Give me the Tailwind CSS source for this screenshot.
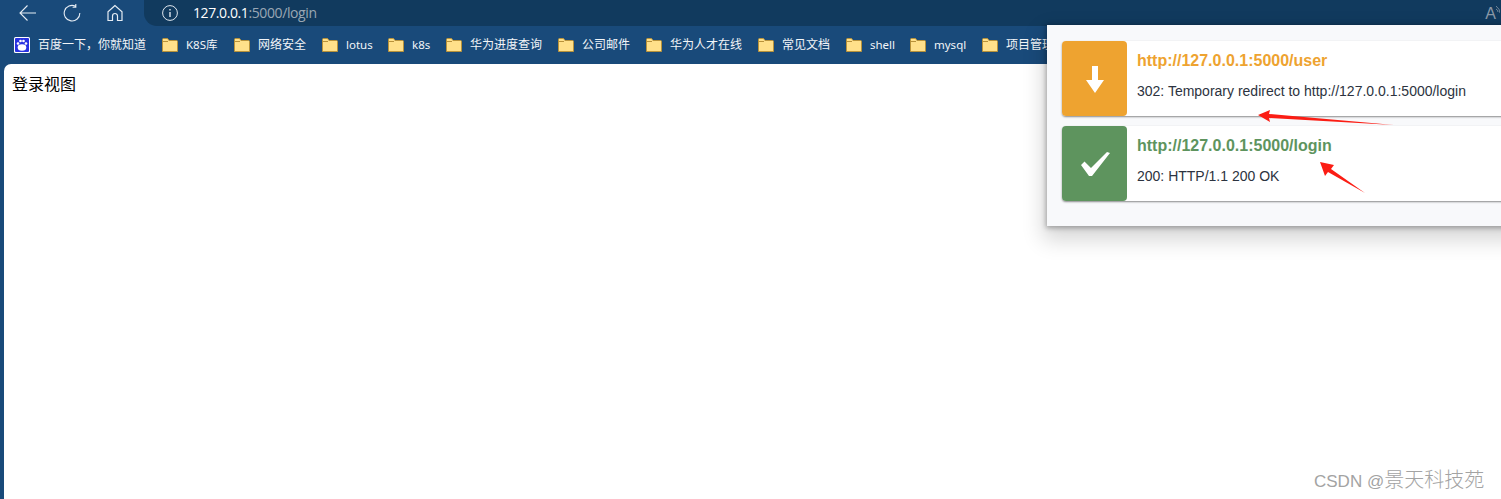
<!DOCTYPE html>
<html lang="zh">
<head>
<meta charset="utf-8">
<script src="https://cdn.jsdelivr.net/npm/@tailwindcss/browser@4"></script>
<title>登录视图</title>
</head>
<body class="relative w-[1501px] h-[499px] overflow-hidden bg-[#194a7a] font-['Liberation_Sans','Noto_Sans_CJK_SC',sans-serif]">
<!-- toolbar -->
<div class="flex h-[26px] items-center">
  <div class="flex w-[144px] shrink-0 items-center pl-[19px] gap-[26px] text-[#e6edf4]">
    <svg class="w-[18px] h-[18px]" viewBox="0 0 18 18" fill="none" stroke="currentColor" stroke-width="1.1"><path d="M1 9H17M8.5 1.5 1 9l7.5 7.500"/></svg>
    <svg class="w-[18px] h-[18px]" viewBox="0 0 18 18" fill="none" stroke="currentColor" stroke-width="1.1"><path d="M12.5 2.2A7.8 7.8 0 1 0 16.8 9M12.8 0v3.2H9.6" /></svg>
    <svg class="w-[16px] h-[18px]" viewBox="0 0 16 18" fill="none" stroke="currentColor" stroke-width="1.2"><path d="M8 1.5 1 7.8V16.5H5.500V12a2.500 2.500 0 0 1 5 0V16.500H15V7.800Z"/></svg>
  </div>
  <div class="flex flex-1 h-[26px] items-center rounded-bl-[13px] bg-[#113a5e] pl-[18px]">
    <svg class="w-[16px] h-[16px] text-[#dfe6ee]" viewBox="0 0 16 16" fill="none" stroke="currentColor" stroke-width="1"><circle cx="8" cy="8" r="7.4"/><path d="M8 7v5M8 4v1.4" stroke-width="1.4"/></svg>
    <div class="ml-[15px] text-[14px] font-['Open_Sans','Noto_Sans',sans-serif] leading-none tracking-[-0.4px]"><span class="text-white">127.0.0.1</span><span class="text-[#9aa7b4]">:5000/login</span></div>
    <div class="ml-auto mr-0 flex items-start pr-[1px] text-[#8b99a8]"><span class="text-[16px] leading-none mt-[2px]">A</span><svg class="w-[4px] h-[8px] mt-[1px]" viewBox="0 0 4 8" fill="none" stroke="currentColor" stroke-width="0.8"><path d="M0 1q4 3 4 7M0 4q2 1 2 3"/></svg></div>
  </div>
</div>
<!-- bookmarks -->
<div class="flex h-[38px] items-center pl-[14px] gap-[16px] overflow-hidden whitespace-nowrap text-[12px] text-[#f2f5f8] font-['Noto_Sans','Noto_Sans_CJK_SC',sans-serif]">
  <div class="flex items-center gap-[8px] shrink-0">
    <svg class="w-[16px] h-[16px]" viewBox="0 0 16 16"><rect width="16" height="16" rx="1.5" fill="#fff"/><rect x="1" y="1" width="14" height="14" rx="1" fill="#2932e1"/><circle cx="4" cy="6.5" r="1.3" fill="#fff"/><circle cx="6.5" cy="4" r="1.3" fill="#fff"/><circle cx="9.5" cy="4" r="1.3" fill="#fff"/><circle cx="12" cy="6.5" r="1.3" fill="#fff"/><ellipse cx="8" cy="10.5" rx="4.3" ry="3.3" fill="#fff"/></svg>
    <span class="w-[108px]">百度一下，你就知道</span>
  </div>
  <div class="flex items-center gap-[8px] shrink-0"><svg class="w-[16px] h-[14px]" viewBox="0 0 16 14"><path d="M.5 13.5V1.5q0-1 1-1h4l1.5 2h7.500q1 0 1 1v10Z" fill="#ffe08a" stroke="#b8923a"/><path d="M.5 3.500H6" stroke="#b8923a" fill="none"/></svg><span class="w-[32px] text-[11.5px]">K8S库</span></div>
  <div class="flex items-center gap-[8px] shrink-0"><svg class="w-[16px] h-[14px]" viewBox="0 0 16 14"><path d="M.5 13.5V1.5q0-1 1-1h4l1.5 2h7.500q1 0 1 1v10Z" fill="#ffe08a" stroke="#b8923a"/><path d="M.5 3.500H6" stroke="#b8923a" fill="none"/></svg><span class="w-[48px]">网络安全</span></div>
  <div class="flex items-center gap-[8px] shrink-0"><svg class="w-[16px] h-[14px]" viewBox="0 0 16 14"><path d="M.5 13.5V1.5q0-1 1-1h4l1.5 2h7.500q1 0 1 1v10Z" fill="#ffe08a" stroke="#b8923a"/><path d="M.5 3.500H6" stroke="#b8923a" fill="none"/></svg><span class="w-[26px] text-[11.5px]">lotus</span></div>
  <div class="flex items-center gap-[8px] shrink-0"><svg class="w-[16px] h-[14px]" viewBox="0 0 16 14"><path d="M.5 13.5V1.5q0-1 1-1h4l1.5 2h7.500q1 0 1 1v10Z" fill="#ffe08a" stroke="#b8923a"/><path d="M.5 3.500H6" stroke="#b8923a" fill="none"/></svg><span class="w-[18px] text-[11.5px]">k8s</span></div>
  <div class="flex items-center gap-[8px] shrink-0"><svg class="w-[16px] h-[14px]" viewBox="0 0 16 14"><path d="M.5 13.5V1.5q0-1 1-1h4l1.5 2h7.500q1 0 1 1v10Z" fill="#ffe08a" stroke="#b8923a"/><path d="M.5 3.500H6" stroke="#b8923a" fill="none"/></svg><span class="w-[72px]">华为进度查询</span></div>
  <div class="flex items-center gap-[8px] shrink-0"><svg class="w-[16px] h-[14px]" viewBox="0 0 16 14"><path d="M.5 13.5V1.5q0-1 1-1h4l1.5 2h7.500q1 0 1 1v10Z" fill="#ffe08a" stroke="#b8923a"/><path d="M.5 3.500H6" stroke="#b8923a" fill="none"/></svg><span class="w-[48px]">公司邮件</span></div>
  <div class="flex items-center gap-[8px] shrink-0"><svg class="w-[16px] h-[14px]" viewBox="0 0 16 14"><path d="M.5 13.5V1.5q0-1 1-1h4l1.5 2h7.500q1 0 1 1v10Z" fill="#ffe08a" stroke="#b8923a"/><path d="M.5 3.500H6" stroke="#b8923a" fill="none"/></svg><span class="w-[72px]">华为人才在线</span></div>
  <div class="flex items-center gap-[8px] shrink-0"><svg class="w-[16px] h-[14px]" viewBox="0 0 16 14"><path d="M.5 13.5V1.5q0-1 1-1h4l1.5 2h7.500q1 0 1 1v10Z" fill="#ffe08a" stroke="#b8923a"/><path d="M.5 3.500H6" stroke="#b8923a" fill="none"/></svg><span class="w-[48px]">常见文档</span></div>
  <div class="flex items-center gap-[8px] shrink-0"><svg class="w-[16px] h-[14px]" viewBox="0 0 16 14"><path d="M.5 13.5V1.5q0-1 1-1h4l1.5 2h7.500q1 0 1 1v10Z" fill="#ffe08a" stroke="#b8923a"/><path d="M.5 3.500H6" stroke="#b8923a" fill="none"/></svg><span class="w-[24px] text-[11.5px]">shell</span></div>
  <div class="flex items-center gap-[8px] shrink-0"><svg class="w-[16px] h-[14px]" viewBox="0 0 16 14"><path d="M.5 13.5V1.5q0-1 1-1h4l1.5 2h7.500q1 0 1 1v10Z" fill="#ffe08a" stroke="#b8923a"/><path d="M.5 3.500H6" stroke="#b8923a" fill="none"/></svg><span class="w-[32px] text-[11.5px]">mysql</span></div>
  <div class="flex items-center gap-[8px] shrink-0"><svg class="w-[16px] h-[14px]" viewBox="0 0 16 14"><path d="M.5 13.5V1.5q0-1 1-1h4l1.5 2h7.500q1 0 1 1v10Z" fill="#ffe08a" stroke="#b8923a"/><path d="M.5 3.500H6" stroke="#b8923a" fill="none"/></svg><span>项目管理</span></div>
</div>
<!-- page -->
<div class="ml-[4px] h-[435px] rounded-tl-[7px] bg-white pl-[8px] pt-[11px] text-[16px] leading-[17px] text-black font-['Noto_Sans_CJK_SC',sans-serif]">登录视图</div>
<!-- popup -->
<div class="absolute left-[1047px] top-[25px] h-[201px] w-[470px] bg-[#f8f9fb] pl-[15px] pt-[16px] shadow-[0_10px_20px_4px_rgba(0,0,0,0.16),0_1px_5px_1px_rgba(0,0,0,0.3)] flex flex-col gap-[10px]">
  <div class="flex h-[75px] rounded-[4px] bg-white shadow-[0_1px_2px_rgba(0,0,0,0.45)]">
    <div class="flex w-[65px] h-[75px] shrink-0 items-center justify-center rounded-[4px] bg-[#eea330]">
      <svg class="w-[18px] h-[28px] mt-[2px]" viewBox="0 0 18 28" fill="#fff"><path d="M6 0H12V14H18L9 27 0 14H6Z"/></svg>
    </div>
    <div class="pl-[10px] pt-[10px]">
      <div class="text-[16px] leading-[20px] font-bold text-[#eea330]">http://127.0.0.1:5000/user</div>
      <div class="mt-[10px] text-[14px] leading-[20px] text-[#2c3340]">302: Temporary redirect to http://127.0.0.1:5000/login</div>
    </div>
  </div>
  <div class="flex h-[75px] rounded-[4px] bg-white shadow-[0_1px_2px_rgba(0,0,0,0.45)]">
    <div class="flex w-[65px] h-[75px] shrink-0 items-center justify-center rounded-[4px] bg-[#5e945e]">
      <svg class="w-[30px] h-[26px]" viewBox="0 0 30 26" fill="#fff"><path d="M1 14 4.500 10.500 11 17 27 1 30 2 12 25 9 25Z"/></svg>
    </div>
    <div class="pl-[10px] pt-[10px]">
      <div class="text-[16px] leading-[20px] font-bold text-[#5e945e]">http://127.0.0.1:5000/login</div>
      <div class="mt-[10px] text-[14px] leading-[20px] text-[#2c3340]">200: HTTP/1.1 200 OK</div>
    </div>
  </div>
</div>
<!-- annotation arrows -->
<svg class="absolute left-[1250px] top-[105px] w-[150px] h-[90px]" viewBox="0 0 150 90" fill="#fb1d14"><path d="M8 10 20 5 19 9 144 20 19 13 20 17Z"/><path d="M70 57 84 60 81 64 115 88 78 67 75 71Z"/></svg>
<!-- watermark -->
<div class="absolute left-[1314px] top-[467px] flex items-baseline text-[#a3a3a3] leading-[24px] whitespace-nowrap"><span class="text-[17px] font-['Liberation_Sans',sans-serif] whitespace-pre">CSDN @</span><span class="text-[20px] font-['Noto_Sans_CJK_SC',sans-serif] font-light">景天科技苑</span></div>
</body>
</html>
